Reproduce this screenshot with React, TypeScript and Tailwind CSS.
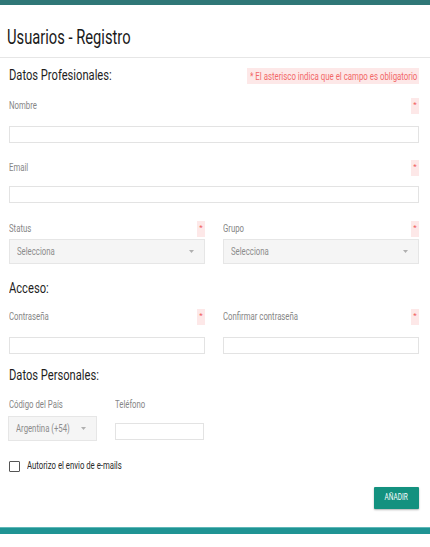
import React from 'react';

const font = { fontFamily: '"Roboto", "Liberation Sans", sans-serif' };

// narrow text: the reference uses a condensed face, so squeeze Roboto horizontally
const T: React.FC<{ children: React.ReactNode; className?: string }> = ({ children, className = 'scale-x-[0.74]' }) => (
  <span className={`inline-block origin-left whitespace-nowrap ${className}`}>{children}</span>
);

const Req: React.FC = () => (
  <span className="flex h-[16px] w-[8px] shrink-0 items-start justify-center bg-[#fde8e8] pt-[3px] text-[8px] leading-none text-[#f05a5a]">*</span>
);

const Label: React.FC<{ text: string; req?: boolean }> = ({ text, req }) => (
  <div className="flex h-[16px] items-center justify-between">
    <span className="text-[10.5px] text-[#868686]">
      <T>{text}</T>
    </span>
    {req && <Req />}
  </div>
);

const Input: React.FC<{ className?: string }> = ({ className = '' }) => (
  <div className={`h-[17px] border border-[#e3e3e3] bg-white ${className}`} />
);

const Select: React.FC<{ value: string; className?: string }> = ({ value, className = '' }) => (
  <div className={`flex h-[25px] items-center border border-[#e6e6e6] bg-[#f5f5f5] pl-[7px] pr-[10px] ${className}`}>
    <span className="min-w-0 flex-1 text-[10.5px] text-[#8c8c8c]">
      <T>{value}</T>
    </span>
    <svg width="5" height="3" viewBox="0 0 5 3" className="shrink-0">
      <path d="M0 0h5L2.5 3z" fill="#b0b0b0" />
    </svg>
  </div>
);

const Heading: React.FC<{ text: string; className?: string }> = ({ text, className = '' }) => (
  <h2 className={`text-[15.5px] leading-none text-[#1e1e1e] ${className}`}>
    <T className="scale-x-[0.72]">{text}</T>
  </h2>
);

export default function App() {
  return (
    <div className="flex h-[547px] w-[430px] flex-col bg-white" style={font}>
      <div className="h-[5px] shrink-0 bg-[#2f7777]" />
      <header className="border-b border-[#e6e6e6] px-[7px] pt-[23px] pb-[10px]">
        <h1 className="text-[19.5px] leading-[19px] text-[#1a1a1a]">
          <T className="scale-x-[0.755]">Usuarios - Registro</T>
        </h1>
      </header>

      <main className="pl-[9px] pr-[11px]">
        <div className="mt-[10px] flex h-[16px] items-center justify-between">
          <Heading text="Datos Profesionales:" />
          <span className="flex h-[16px] w-[172px] items-center overflow-visible bg-[#fde8e8] pl-[3px] text-[10px] text-[#f26868]">
            <T className="scale-x-[0.785]">* El asterisco indica que el campo es obligatorio</T>
          </span>
        </div>

        <div className="mt-[14px]">
          <Label text="Nombre" req />
          <Input className="mt-[12px]" />
        </div>

        <div className="mt-[17px]">
          <Label text="Email" req />
          <Input className="mt-[10px]" />
        </div>

        <div className="mt-[18px] grid grid-cols-2 gap-x-[18px]">
          <div>
            <Label text="Status" req />
            <Select value="Selecciona" className="mt-[2px]" />
          </div>
          <div>
            <Label text="Grupo" req />
            <Select value="Selecciona" className="mt-[2px]" />
          </div>
        </div>

        <Heading text="Acceso:" className="mt-[17px]" />

        <div className="mt-[12px] grid grid-cols-2 gap-x-[18px]">
          <div>
            <Label text="Contraseña" req />
            <Input className="mt-[12px]" />
          </div>
          <div>
            <Label text="Confirmar contraseña" req />
            <Input className="mt-[12px]" />
          </div>
        </div>

        <Heading text="Datos Personales:" className="mt-[14px]" />

        <div className="mt-[14px] flex gap-x-[18px]">
          <div className="w-[88px]">
            <Label text="Código del País" />
            <Select value="Argentina (+54)" className="-ml-px mt-[3px]" />
          </div>
          <div className="w-[89px]">
            <Label text="Teléfono" />
            <Input className="mt-[10px]" />
          </div>
        </div>

        <label className="mt-[17px] flex h-[16px] items-center gap-[7px]">
          <span className="h-[11px] w-[11px] shrink-0 rounded-[1px] border border-[#555] bg-white" />
          <span className="text-[10.5px] text-[#2a2a2a]">
            <T>Autorizo el envio de e-mails</T>
          </span>
        </label>

        <div className="mt-[13px] flex justify-end">
          <button className="flex h-[22px] w-[45px] items-center justify-center rounded-[1px] bg-[#13917f] text-[9px] text-white shadow-[0_1px_2px_rgba(0,0,0,0.3)]">
            <span className="inline-block scale-x-[0.72] whitespace-nowrap">AÑADIR</span>
          </button>
        </div>
      </main>

      <div className="mt-[18px] h-[7px] shrink-0 border-t border-[#5fb7b7] bg-[#1f9494]" />
    </div>
  );
}
